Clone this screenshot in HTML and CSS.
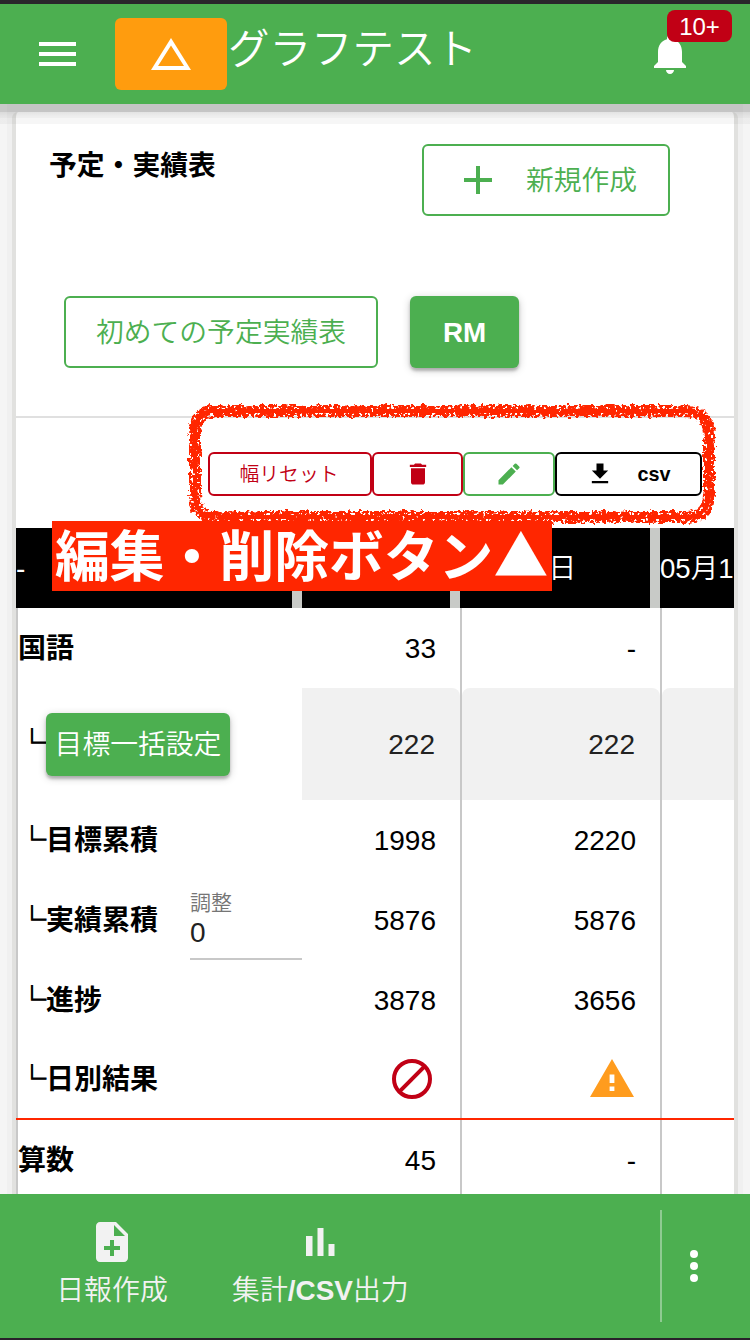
FILE: index.html
```html
<!DOCTYPE html>
<html lang="ja">
<head>
  <meta charset="UTF-8" />
  <meta name="viewport" content="width=device-width, initial-scale=1.0"/>
  <title>グラフテスト</title>
  <link rel="stylesheet" href="styles.css">
</head>
<body>

<header class="app-bar">
  <svg class="menu-icon" viewBox="0 0 37 24"><path d="M0 0h37v4H0zM0 10h37v4H0zM0 20h37v4H0z"/></svg>
  <button class="alert-btn">
    <svg width="40" height="32" viewBox="0 0 40 32"><path fill-rule="evenodd" d="M20 0L40 32H0zM20 7.500L7 28H33z"/></svg>
  </button>
  <h1 class="app-title">グラフテスト</h1>
  <div class="bell">
    <svg class="icon" viewBox="0 0 24 24"><path d="M12 22c1.100 0 2-.9 2-2h-4c0 1.100.89 2 2 2zm6-6v-5c0-3.070-1.640-5.640-4.500-6.320V4c0-.83-.67-1.500-1.500-1.500s-1.500.67-1.500 1.500v.68C7.630 5.360 6 7.920 6 11v5l-2 2v1h16v-1l-2-2z"/></svg>
    <span class="badge">10+</span>
  </div>
</header>

<main class="page">
  <div class="card">
    <section class="top">
      <div class="title-row">
        <h2>予定・実績表</h2>
        <button class="btn outline create">
          <svg class="icon" viewBox="0 0 24 24"><path d="M19 13h-6v6h-2v-6H5v-2h6V5h2v6h6v2z"/></svg>
          <span>新規作成</span>
        </button>
      </div>
      <div class="tabs">
        <button class="btn outline first">初めての予定実績表</button>
        <button class="btn filled rm">RM</button>
      </div>
    </section>

    <div class="tools">
      <button class="tool red reset">幅リセット</button>
      <button class="tool red trash">
        <svg class="small" viewBox="0 0 24 24"><path d="M6 19c0 1.100.9 2 2 2h8c1.100 0 2-.9 2-2V7H6v12zM19 4h-3.500l-1-1h-5l-1 1H5v2h14V4z"/></svg>
      </button>
      <button class="tool green edit">
        <svg class="small" viewBox="0 0 24 24"><path d="M3 17.250V21h3.750L17.810 9.940l-3.750-3.750L3 17.250zM20.710 7.040a1 1 0 0 0 0-1.410l-2.340-2.340a1 1 0 0 0-1.410 0l-1.830 1.830 3.750 3.750 1.830-1.830z"/></svg>
      </button>
      <button class="tool black csv">
        <svg class="small" viewBox="0 0 24 24"><path d="M19 9h-4V3H9v6H5l7 7 7-7zM5 18v2h14v-2H5z"/></svg>
        <span>csv</span>
      </button>
    </div>

    <div class="sheet">
      <div class="row head">
        <div class="cell name">-</div>
        <div class="cell"></div>
        <div class="cell">05月11日</div>
        <div class="cell last">05月1</div>
      </div>
      <div class="row">
        <div class="cell name subject">国語</div>
        <div class="cell">33</div>
        <div class="cell">-</div>
        <div class="cell"></div>
      </div>
      <div class="row goal">
        <div class="cell name"><span class="branch">└</span><button class="btn filled bulk">目標一括設定</button></div>
        <div class="cell"><div class="field flat">222</div></div>
        <div class="cell"><div class="field">222</div></div>
        <div class="cell"><div class="field open"></div></div>
      </div>
      <div class="row">
        <div class="cell name"><span class="branch">└</span>目標累積</div>
        <div class="cell">1998</div>
        <div class="cell">2220</div>
        <div class="cell"></div>
      </div>
      <div class="row">
        <div class="cell name">
          <span class="branch">└</span>実績累積
          <div class="adjust"><label>調整</label><span>0</span></div>
        </div>
        <div class="cell">5876</div>
        <div class="cell">5876</div>
        <div class="cell"></div>
      </div>
      <div class="row">
        <div class="cell name"><span class="branch">└</span>進捗</div>
        <div class="cell">3878</div>
        <div class="cell">3656</div>
        <div class="cell"></div>
      </div>
      <div class="row result">
        <div class="cell name"><span class="branch">└</span>日別結果</div>
        <div class="cell">
          <svg class="icon ng" viewBox="0 0 24 24"><circle cx="12" cy="12" r="9"/><path d="M5.600 18.400L18.400 5.600"/></svg>
        </div>
        <div class="cell">
          <svg class="icon warn" viewBox="0 0 24 24"><path d="M1 21h22L12 2 1 21zm12.200-3h-2.400v-2.200h2.400v2.200zm0-4h-2.400v-4.300h2.400v4.300z"/></svg>
        </div>
        <div class="cell"></div>
      </div>
      <div class="row">
        <div class="cell name subject">算数</div>
        <div class="cell">45</div>
        <div class="cell">-</div>
        <div class="cell"></div>
      </div>
    </div>
  </div>

  <!-- hand drawn callout over the edit buttons -->
  <svg class="marker" viewBox="0 0 550 140">
    <filter id="chalk" x="-5%" y="-10%" width="110%" height="120%">
      <feTurbulence type="fractalNoise" baseFrequency="0.22" numOctaves="3" seed="4" result="n"/>
      <feDisplacementMap in="SourceGraphic" in2="n" scale="7" xChannelSelector="R" yChannelSelector="G" result="rough"/>
      <feTurbulence type="fractalNoise" baseFrequency="0.35" numOctaves="2" seed="9"/>
      <feColorMatrix values="0 0 0 0 0  0 0 0 0 0  0 0 0 0 0  14 0 0 0 -5" result="grain"/>
      <feComposite in="rough" in2="grain" operator="in"/>
    </filter>
    <path filter="url(#chalk)" fill="none" stroke="#ff2600" stroke-width="12" d="M32 21H504Q529 21 529 45V104Q529 127 506 127H34Q15 127 15 104V45Q15 21 32 21"/>
    <path filter="url(#chalk)" fill="none" stroke="#ff2600" stroke-width="7" d="M32 22H504Q528 22 528 45V104Q528 126 506 126H34Q15 126 15 104V45Q15 22 32 22"/>
    <path fill="none" stroke="#ff2600" stroke-width="4" stroke-dasharray="23 2 41 1 12 2" d="M32 21H504Q529 21 529 45V104Q529 127 506 127H34Q15 127 15 104V45Q15 21 32 21"/>
  </svg>
  <div class="callout">編集・削除ボタン▲</div>
</main>

<footer class="bottom-bar">
  <a class="nav report">
    <svg class="icon" viewBox="0 0 24 24"><path d="M14 2H6c-1.100 0-1.990.9-1.990 2L4 20c0 1.100.89 2 1.990 2H18c1.100 0 2-.9 2-2V8l-6-6zm2 14h-3v3h-2v-3H8v-2h3v-3h2v3h3v2zm-3-7V3.500L18.500 9H13z"/></svg>
    <span>日報作成</span>
  </a>
  <a class="nav chart">
    <svg class="icon" viewBox="0 0 48 48"><path d="M10 18h6.500v20H10zM21.500 10h6v28h-6zM32.500 26h6v12h-6z"/></svg>
    <span>集計<b>/CSV</b>出力</span>
  </a>
  <div class="more">
    <svg width="8" height="32" viewBox="0 0 8 32"><circle cx="4" cy="4" r="4"/><circle cx="4" cy="16" r="4"/><circle cx="4" cy="28" r="4"/></svg>
  </div>
</footer>

</body>
</html>
```

FILE: styles.css
```css
* {
  box-sizing: border-box;
}
body {
  margin: 0;
  width: 750px;
  height: 1340px;
  display: flex;
  flex-direction: column;
  overflow: hidden;
  background: #f5f5f5;
  border-top: 4px solid #29272b;
  border-bottom: 2px solid #29212b;
  font-family: "Liberation Sans", "Noto Sans CJK JP", sans-serif;
  font-size: 28px;
  font-weight: 350;
  line-height: 40px;
}
h1, h2 {
  margin: 0;
}
button {
  font: inherit;
  padding: 0;
  border: none;
  cursor: pointer;
}
svg {
  display: block;
  flex: none;
  fill: currentColor;
}
.icon {
  width: 48px;
  height: 48px;
}
.small {
  width: 28px;
  height: 28px;
}

/* header */
.app-bar {
  position: relative;
  z-index: 2;
  flex: none;
  display: flex;
  height: 100px;
  padding-left: 39px;
  background: #4caf50;
  color: #fff;
}
.app-bar::after {
  content: "";
  position: absolute;
  top: 100px;
  left: 0;
  width: 100%;
  height: 20px;
  background: linear-gradient(rgba(0,0,0,0.18) 8px, rgba(0,0,0,0.11) 8px, rgba(0,0,0,0.07) 12px, rgba(0,0,0,0.06) 14px, rgba(0,0,0,0.035) 14px);
}
.menu-icon {
  width: 37px;
  height: 24px;
  margin: 38px 39px 0 0;
}
.alert-btn {
  display: flex;
  justify-content: center;
  width: 112px;
  height: 72px;
  margin-top: 14px;
  padding-top: 20px;
  border-radius: 6px;
  background: #ff9c0e;
  color: #fff;
}
.app-title {
  flex: 1;
  margin: 16px 0 0 1px;
  font-size: 41.5px;
  font-weight: 350;
  line-height: 60px;
}
.bell {
  position: relative;
  width: 48px;
  margin: 26px 56px 0 0;
}
.badge {
  position: absolute;
  left: 21px;
  top: -20px;
  width: 65px;
  height: 32px;
  border-radius: 8px;
  background: #c10015;
  font-size: 24px;
  line-height: 34px;
  text-align: center;
}

/* card */
.page {
  position: relative;
  flex: 1;
  min-height: 0;
  padding: 8px 12px 0;
  background: linear-gradient(90deg, #f5f5f5 7px, #f0f0f0 7px, #f0f0f0 743px, #f5f5f5 743px);
}
.card {
  height: 1082px;
  border: solid #e1e1df;
  border-width: 0 4px;
  border-radius: 6px 6px 0 0;
  background: #fff;
  overflow: hidden;
}
.top {
  height: 306px;
  padding-top: 32px;
  border-bottom: 2px solid #e0e0e0;
}
.title-row {
  display: flex;
  justify-content: space-between;
  padding: 0 64px 0 33px;
}
.title-row h2 {
  padding-top: 2px;
  font-size: 27.8px;
  font-weight: 700;
}
.btn {
  display: flex;
  align-items: center;
  justify-content: center;
  height: 72px;
  border-radius: 6px;
  font-size: 27.8px;
  font-weight: 350;
  padding-top: 2px;
  white-space: nowrap;
}
.outline {
  border: 2px solid #4caf50;
  background: #fff;
  color: #4caf50;
}
.filled {
  background: #4caf50;
  color: #fff;
  box-shadow: 0 2px 8px rgba(0,0,0,0.2), 0 3px 3px rgba(0,0,0,0.22);
}
.create {
  width: 248px;
  gap: 24px;
  padding: 0 1px 0 0;
}
.create span {
  padding-top: 1px;
}
.tabs {
  display: flex;
  gap: 32px;
  margin: 80px 0 0 48px;
}
.first {
  width: 314px;
}
.rm {
  width: 109px;
  font-weight: 700;
}

/* tool buttons */
.tools {
  display: flex;
  justify-content: flex-end;
  height: 110px;
  padding: 34px 32px 0 0;
}
.tool {
  display: flex;
  align-items: center;
  justify-content: center;
  height: 44px;
  border: 2px solid currentColor;
  border-radius: 6px;
  background: #fff;
  font-size: 19.8px;
}
.red {
  color: #c10015;
}
.green {
  color: #4caf50;
}
.black {
  color: #000;
}
.reset {
  width: 164px;
  padding: 0 2px 1px 0;
}
.trash {
  width: 91px;
}
.edit {
  width: 92px;
}
.csv {
  width: 147px;
  gap: 23px;
  font-weight: 700;
}

/* table */
.row {
  display: grid;
  grid-template-columns: 286px 158px 200px 74px;
  height: 80px;
}
.cell {
  display: flex;
  align-items: center;
  justify-content: flex-end;
  min-width: 0;
  padding: 2px 24px 0 0;
  border-left: 2px solid #c8c8c8;
  white-space: nowrap;
}
.cell:nth-child(2) {
  border-left: none;
}
.name {
  justify-content: flex-start;
  padding: 2px 0 0;
  font-weight: 700;
}
.head {
  background: #000;
  color: #fff;
}
.head .cell {
  justify-content: flex-start;
  padding: 2px 0 0;
  border: solid #c8cac7;
  border-width: 0 10px 0 0;
  font-weight: 350;
}
.head .last {
  border: none;
  font-size: 27.6px;
}
.branch {
  width: 28px;
  padding-bottom: 5px;
  font-family: "Noto Sans CJK JP", sans-serif;
  font-weight: 500;
  -webkit-text-stroke: 1px #000;
}
.goal {
  height: 112px;
}
.goal .cell {
  padding: 0;
}
.field {
  display: flex;
  align-items: center;
  justify-content: flex-end;
  width: 100%;
  height: 100%;
  padding: 2px 25px 0 0;
  border-radius: 8px 8px 0 0;
  background: #f1f1f1;
  color: #222;
}
.flat {
  border-top-left-radius: 0;
}
.open {
  border-top-right-radius: 0;
}
.bulk {
  width: 184px;
  height: 63px;
}
.adjust {
  display: flex;
  flex-direction: column;
  width: 112px;
  height: 78px;
  margin-left: 32px;
  padding-top: 10px;
  border-bottom: 2px solid #c8c8c8;
  font-weight: 350;
}
.adjust label {
  color: #757575;
  font-size: 21px;
  line-height: 22px;
}
.adjust span {
  color: #222;
  line-height: 38px;
}
.result {
  border-bottom: 2px solid #ff2600;
}
.result .cell + .cell {
  padding-top: 0;
}
.ng {
  fill: none;
  stroke: #c10015;
  stroke-width: 2;
}
.warn {
  color: #ff9c1e;
}

/* callout */
.marker {
  position: absolute;
  left: 180px;
  top: 286px;
  width: 550px;
  height: 140px;
}
.callout {
  position: absolute;
  left: 52px;
  top: 417px;
  width: 500px;
  height: 70px;
  padding-left: 3px;
  background: #ff2600;
  color: #fff;
  font-family: "Noto Sans CJK JP", sans-serif;
  font-size: 54.8px;
  font-weight: 700;
  line-height: 63px;
  white-space: nowrap;
}

/* footer */
.bottom-bar {
  flex: none;
  display: flex;
  align-items: center;
  height: 144px;
  background: #4caf50;
  color: #f2f2f2;
}
.nav {
  display: flex;
  flex-direction: column;
  align-items: center;
  height: 144px;
  padding-top: 24px;
  font-size: 27.9px;
  line-height: 49px;
}
.nav b {
  font-weight: 700;
}
.report {
  width: 112px;
  margin-left: 56px;
}
.chart {
  margin-left: 64px;
}
.more {
  display: flex;
  align-items: center;
  width: 90px;
  height: 112px;
  margin-left: auto;
  padding-left: 28px;
  border-left: 2px solid #8fcb92;
  color: #fff;
}
```
